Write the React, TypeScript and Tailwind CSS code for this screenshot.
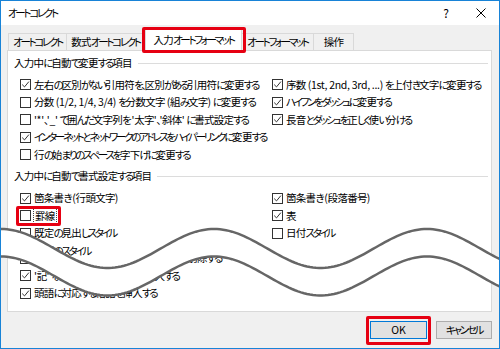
import React from "react";

type Item = { label: string; checked: boolean };
type Row = { left?: Item; right?: Item };

const group1: Row[] = [
  {
    left: { label: "左右の区別がない引用符を、区別がある引用符に変更する", checked: true },
    right: { label: "序数 (1st, 2nd, 3rd, ...) を上付き文字に変更する", checked: true },
  },
  {
    left: { label: "分数 (1/2, 1/4, 3/4) を分数文字 (組み文字) に変更する", checked: false },
    right: { label: "ハイフンをダッシュに変更する", checked: true },
  },
  {
    left: { label: "'*'、'_' で囲んだ文字列を '太字'、'斜体' に書式設定する", checked: false },
    right: { label: "長音とダッシュを正しく使い分ける", checked: true },
  },
  { left: { label: "インターネットとネットワークのアドレスをハイパーリンクに変更する", checked: true } },
  { left: { label: "行の始まりのスペースを字下げに変更する", checked: false } },
];

const group2Top: Row[] = [
  {
    left: { label: "箇条書き (行頭文字)", checked: true },
    right: { label: "箇条書き (段落番号)", checked: true },
  },
  { right: { label: "表", checked: true } },
  {
    left: { label: "既定の見出しスタイル", checked: false },
    right: { label: "日付スタイル", checked: false },
  },
  { left: { label: "結語のスタイル", checked: false } },
];

const group2Bottom: Row[] = [
  { left: { label: "行頭と行末にある余分な全角スペースを削除する", checked: false } },
  { left: { label: "'記' などに対応する '以上' を挿入する", checked: true } },
  { left: { label: "頭語に対応する結語を挿入する", checked: true } },
];

// Meiryo UI has narrow kana: kana runs are tightened more than kanji and latin
function Label({ text }: { text: string }) {
  const parts = text.match(/[\x20-\x7e]+|[\u3400-\u9fff々]+|[^\x20-\x7e\u3400-\u9fff々]+/g) ?? [];
  return (
    <span className="whitespace-nowrap">
      {parts.map((p, i) => {
        if (/^[\x20-\x7e]+$/.test(p))
          return (
            <span key={i} className="tracking-[-0.3px]">
              {p}
            </span>
          );
        if (/^[\u3400-\u9fff々]+$/.test(p))
          return (
            <span key={i} className="tracking-[-0.7px]">
              {p}
            </span>
          );
        return (
          <span key={i} className="tracking-[-2.3px]">
            {p}
          </span>
        );
      })}
    </span>
  );
}

function Box({ checked }: { checked: boolean }) {
  return (
    <span className="w-[11px] h-[11px] shrink-0 border border-[#333] bg-white flex items-center justify-center">
      {checked && (
        <svg width="9" height="9" viewBox="0 0 9 9">
          <path d="M1.2 4.6 L3.5 6.9 L7.9 1.6" fill="none" stroke="#333" strokeWidth="1" />
        </svg>
      )}
    </span>
  );
}

function Check({ item }: { item: Item }) {
  return (
    <div className="flex items-center gap-[3px] whitespace-nowrap">
      <Box checked={item.checked} />
      <Label text={item.label} />
    </div>
  );
}

function Rows({ rows }: { rows: Row[] }) {
  return (
    <div className="ml-[6px] flex flex-col">
      {rows.map((r, i) => (
        <div key={i} className="grid grid-cols-[252px_1fr] h-[17.5px] items-center">
          <div>{r.left && <Check item={r.left} />}</div>
          <div>{r.right && <Check item={r.right} />}</div>
        </div>
      ))}
    </div>
  );
}

function GroupTitle({ text }: { text: string }) {
  return (
    <div className="flex items-center gap-[6px] h-[14px] pr-[3px]">
      <Label text={text} />
      <div className="flex-1 border-t border-[#dcdcdc]" />
    </div>
  );
}

const waveY = (x: number) => 247.5 - 19.5 * Math.cos((2 * Math.PI * x) / 213);
const GAP = 27.5;

function wave(offset: number) {
  const pts: string[] = [];
  for (let x = -6; x <= 506; x += 3) {
    pts.push(`${x},${(waveY(x) + offset).toFixed(2)}`);
  }
  return pts;
}

// the lower half of the cut screenshot only shows below the lower wave line
function lowerClip(left: number, top: number) {
  const pts: string[] = [];
  for (let x = -6; x <= 506; x += 3) {
    pts.push(`${x - left}px ${(waveY(x) + GAP - top).toFixed(2)}px`);
  }
  pts.push(`${506 - left}px 200px`, `${-6 - left}px 200px`);
  return `polygon(${pts.join(", ")})`;
}

function Wave() {
  const top = wave(0);
  const bottom = wave(GAP);
  const band = `M${top.join(" L")} L${[...bottom].reverse().join(" L")} Z`;
  return (
    <svg className="absolute inset-0 pointer-events-none z-20" width="500" height="349" viewBox="0 0 500 349">
      <path d={band} fill="#fff" />
      <path d={`M${top.join(" L")}`} fill="none" stroke="#666" strokeWidth="2.5" />
      <path d={`M${bottom.join(" L")}`} fill="none" stroke="#666" strokeWidth="2.5" />
    </svg>
  );
}

const tabs = [
  { label: "オートコレクト", w: "w-[59px]" },
  { label: "数式オートコレクト", w: "w-[79px]" },
  { label: "入力オートフォーマット", w: "w-[97px]", active: true },
  { label: "オートフォーマット", w: "w-[73px]" },
  { label: "操作", w: "w-[41px]" },
];

export default function App() {
  return (
    <div className="relative w-[500px] h-[349px] overflow-hidden bg-[#f0f0f0] border border-[#1883d7] flex flex-col text-[10.5px] text-black font-['Noto_Sans_CJK_JP',sans-serif] [font-feature-settings:'palt'] leading-none">
      {/* title bar */}
      <div className="h-[24px] bg-white flex items-center pl-[7px]">
        <Label text="オートコレクト" />
        <div className="ml-auto flex items-center h-full">
          <span className="w-[34px] text-center text-[12px]">?</span>
          <span className="w-[36px] flex justify-center">
            <svg width="10" height="10" viewBox="0 0 10 10">
              <path d="M0.5 0.5 L9.5 9.5 M9.5 0.5 L0.5 9.5" stroke="#000" strokeWidth="1" />
            </svg>
          </span>
        </div>
      </div>

      {/* tabs */}
      <div className="h-[25px] flex items-end pl-[7px]">
        {tabs.map((t) =>
          t.active ? (
            <div
              key={t.label}
              className={`${t.w} relative z-10 h-[22px] -mb-px bg-white border border-b-0 border-[#d9d9d9] flex items-center justify-center`}
            >
              <Label text={t.label} />
              <div className="absolute -left-[4px] -right-[5px] -top-[3px] -bottom-[2px] border-[3px] border-[#e60012] rounded-[2px]" />
            </div>
          ) : (
            <div
              key={t.label}
              className={`${t.w} h-[17px] bg-[#f0f0f0] border border-b-0 border-[#d9d9d9] -ml-px first:ml-0 flex items-center justify-center`}
            >
              <Label text={t.label} />
            </div>
          )
        )}
      </div>

      {/* panel */}
      <div className="ml-[6px] mr-[7px] h-[262px] bg-white border border-[#d9d9d9] pl-[6px] pt-[5px] flex flex-col">
        <GroupTitle text="入力中に自動で変更する項目" />
        <div className="mt-[6px]">
          <Rows rows={group1} />
        </div>
        <div className="mt-[6px]">
          <GroupTitle text="入力中に自動で書式設定する項目" />
        </div>
        <div className="mt-[6px] ml-[6px] flex flex-col">
          {group2Top.map((r, i) => (
            <div key={i} className="grid grid-cols-[252px_1fr] h-[17.5px] items-center">
              <div>
                {i === 1 ? (
                  <div className="relative inline-flex items-center gap-[3px] whitespace-nowrap">
                    <Box checked={false} />
                    <span className="outline-1 outline-dotted outline-[#444] px-px py-[2px]">
                      <Label text="罫線" />
                    </span>
                    <div className="absolute -left-[4px] -right-[5px] -top-[3px] -bottom-[3px] border-[3px] border-[#e60012] rounded-[2px]" />
                  </div>
                ) : (
                  r.left && <Check item={r.left} />
                )}
              </div>
              <div>{r.right && <Check item={r.right} />}</div>
            </div>
          ))}
        </div>
        <div className="-mt-[10px] bg-white" style={{ clipPath: lowerClip(14, 249.5) }}>
          <Rows rows={group2Bottom} />
        </div>
      </div>

      {/* buttons */}
      <div className="mt-[9px] flex justify-end gap-[9px] pr-[7px]">
        <div className="relative">
          <button className="w-[57px] h-[18px] bg-[#e1e1e1] border border-[#0078d7] flex items-center justify-center">
            OK
          </button>
          <div className="absolute -left-[4px] -right-[4px] -top-[5px] -bottom-[6px] border-[3px] border-[#e60012] rounded-[2px]" />
        </div>
        <button className="w-[56px] h-[18px] bg-[#e1e1e1] border border-[#adadad] flex items-center justify-center">
          <Label text="キャンセル" />
        </button>
      </div>

      <Wave />
    </div>
  );
}
